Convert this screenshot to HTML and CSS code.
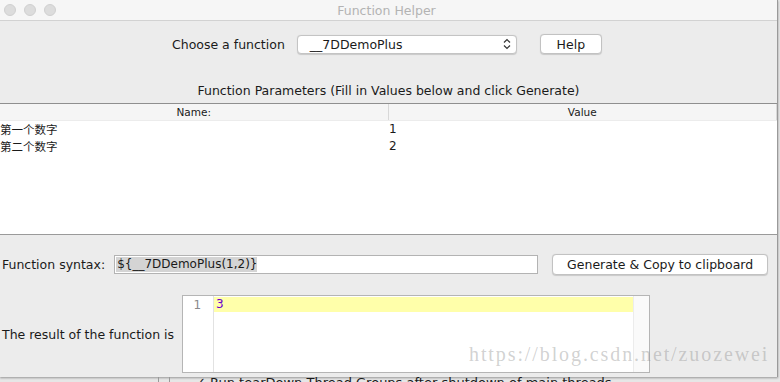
FILE: index.html
```html
<!DOCTYPE html>
<html lang="en">
<head>
    <meta charset="UTF-8">
    <title>Function Helper</title>
    <link rel="stylesheet" href="styles.css">
</head>
<body>

<div class="window">
    <div class="titlebar">
        <div class="lights">
            <span class="light"></span>
            <span class="light"></span>
            <span class="light"></span>
        </div>
        <div class="title">Function Helper</div>
    </div>

    <div class="choose-row">
        <span class="label">Choose a function</span>
        <div class="select">
            <span>__7DDemoPlus</span>
            <svg class="chevrons" width="8" height="12" viewBox="0 0 8 12">
                <path d="M1 4.5 L4 1.5 L7 4.5 M1 7.5 L4 10.5 L7 7.5" fill="none" stroke="#333" stroke-width="1.2"/>
            </svg>
        </div>
        <button class="btn help-btn" type="button">Help</button>
    </div>

    <div class="params-title">Function Parameters (Fill in Values below and click Generate)</div>

    <div class="params-table">
        <div class="table-head">
            <div class="head-cell">Name:</div>
            <div class="head-cell">Value</div>
        </div>
        <div class="table-row">
            <div class="cell cjk">第一个数字</div>
            <div class="cell">1</div>
        </div>
        <div class="table-row">
            <div class="cell cjk">第二个数字</div>
            <div class="cell">2</div>
        </div>
    </div>

    <div class="syntax-row">
        <span class="label">Function syntax:</span>
        <div class="syntax-input"><span class="selected">${__7DDemoPlus(1,2)}</span></div>
        <button class="btn gen-btn" type="button">Generate &amp; Copy to clipboard</button>
    </div>

    <div class="result-row">
        <span class="label">The result of the function is</span>
        <div class="editor">
            <div class="gutter">1</div>
            <div class="code">
                <div class="code-line"><span class="num">3</span></div>
            </div>
            <div class="scroll-track"></div>
        </div>
    </div>
</div>

<div class="behind">
    <span class="tick-col"></span>
    <span class="tick-col"></span>
    <span class="behind-text">✓ Run tearDown Thread Groups after shutdown of main threads</span>
</div>

<div class="watermark">https://blog.csdn.net/zuozewei</div>

</body>
</html>
```

FILE: styles.css
```css
html, body {
    margin: 0;
    padding: 0;
}
body {
    width: 780px;
    height: 382px;
    overflow: hidden;
    position: relative;
    background: #e6e6e6;
    font-family: "DejaVu Sans", "Noto Sans CJK SC", sans-serif;
    font-size: 12px;
    color: #1a1a1a;
}
.window {
    width: 777px;
    height: 377px;
    background: #ececec;
    border-right: 1px solid #9a9a9a;
    box-shadow: 0 1px 2px rgba(0, 0, 0, 0.35);
    display: flex;
    flex-direction: column;
}

/* barre de titre */
.titlebar {
    height: 20px;
    background: #f6f6f6;
    border-bottom: 1px solid #d2d2d2;
    display: flex;
    align-items: center;
}
.lights {
    display: flex;
    gap: 8px;
    padding-left: 4px;
}
.light {
    width: 12px;
    height: 12px;
    border-radius: 50%;
    background: #dcdcdc;
    border: 0.5px solid #d0d0d0;
    box-sizing: border-box;
}
.title {
    flex: 1;
    text-align: center;
    color: #b3b3b3;
    font-size: 12.5px;
    padding-right: 60px;
}

/* choix de la fonction */
.choose-row {
    display: flex;
    align-items: center;
    margin-top: 13px;
    height: 20px;
    padding-left: 172px;
}
.label {
    font-size: 12.5px;
    white-space: nowrap;
}
.select {
    margin-left: 12px;
    width: 220px;
    height: 19px;
    box-sizing: border-box;
    background: #fff;
    border: 1px solid #c4c4c4;
    border-radius: 4px;
    display: flex;
    align-items: center;
    justify-content: space-between;
    padding: 0 5px 0 12px;
    font-size: 12.5px;
    box-shadow: 0 0.5px 1px rgba(0, 0, 0, 0.15);
}
.btn {
    font-family: inherit;
    font-size: 12.5px;
    color: #1a1a1a;
    background: #fff;
    border: 1px solid #c2c2c2;
    border-radius: 4px;
    box-shadow: 0 0.5px 1px rgba(0, 0, 0, 0.15);
    padding: 0;
}
.help-btn {
    margin-left: 23px;
    width: 62px;
    height: 20px;
}

/* tableau des paramètres */
.params-title {
    margin-top: 29px;
    height: 16px;
    line-height: 16px;
    text-align: center;
    font-size: 12.5px;
}
.params-table {
    margin-top: 4px;
    height: 130px;
    background: #fff;
    border-top: 1px solid #8f8f8f;
    border-bottom: 1px solid #9a9a9a;
}
.table-head {
    display: flex;
    height: 16px;
    background: #f5f5f5;
    border-bottom: 1px solid #ececec;
    font-size: 10.5px;
    line-height: 16px;
}
.head-cell {
    flex: 1;
    text-align: center;
    border-right: 1px solid #d8d8d8;
}
.table-row {
    display: flex;
    height: 17px;
    line-height: 17px;
}
.cell {
    flex: 1;
    padding-left: 1px;
}
.cjk {
    font-family: "Noto Sans CJK SC", sans-serif;
    font-size: 11.5px;
    padding-left: 0;
}

/* syntaxe */
.syntax-row {
    display: flex;
    align-items: center;
    margin-top: 19px;
    height: 21px;
    padding-left: 2px;
}
.syntax-input {
    margin-left: 9px;
    width: 424px;
    height: 19px;
    box-sizing: border-box;
    background: #fff;
    border: 1px solid #b3b3b3;
    padding: 1px;
    display: flex;
    align-items: center;
    font-size: 12px;
}
.selected {
    background: #d4d4d4;
    height: 15px;
    line-height: 15px;
    padding-left: 1px;
}
.gen-btn {
    margin-left: 14px;
    width: 216px;
    height: 21px;
}

/* résultat */
.result-row {
    display: flex;
    align-items: center;
    margin-top: 20px;
    padding-left: 2px;
}
.editor {
    margin-left: 8px;
    width: 468px;
    height: 78px;
    box-sizing: border-box;
    background: #fff;
    border: 1px solid #b5b5b5;
    display: flex;
}
.gutter {
    width: 31px;
    border-right: 1px solid #e2e2e2;
    color: #8a8a8a;
    text-align: right;
    padding-right: 12px;
    box-sizing: border-box;
    padding-top: 1px;
    line-height: 16px;
}
.code {
    flex: 1;
    padding-top: 1px;
}
.code-line {
    background: #ffffaa;
    height: 15px;
    line-height: 15px;
    padding-left: 2px;
}
.num {
    color: #6a00d0;
}
.scroll-track {
    width: 15px;
    background: #fafafa;
    border-left: 1px solid #ececec;
}

/* fenêtre derrière */
.behind {
    display: flex;
    align-items: flex-start;
    height: 20px;
    padding-left: 158px;
    font-size: 13px;
}
.tick-col {
    width: 10px;
    height: 20px;
    border-left: 1px solid #999;
}
.behind-text {
    margin-left: 15px;
    margin-top: -2px;
}

.watermark {
    position: absolute;
    left: 469px;
    top: 343px;
    font-family: "Liberation Serif", serif;
    font-size: 20px;
    letter-spacing: 1.9px;
    color: rgba(140, 140, 140, 0.4);
    white-space: nowrap;
}
```
